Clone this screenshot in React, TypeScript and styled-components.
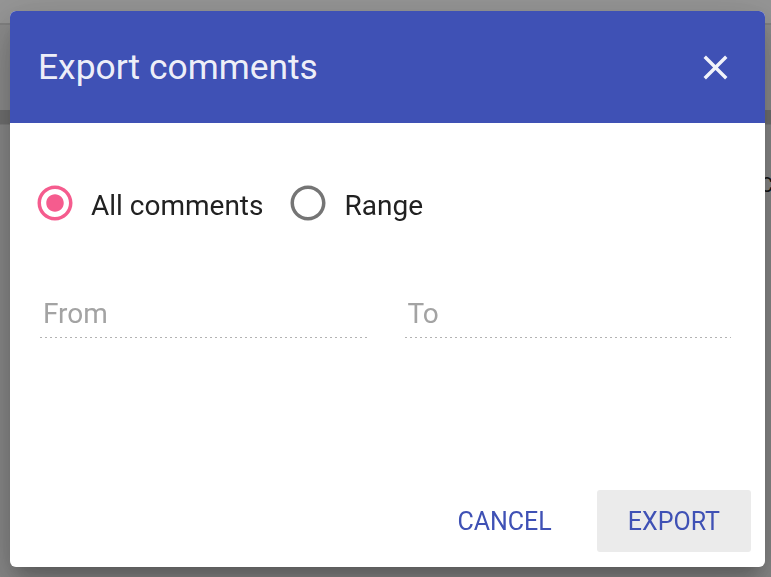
import React from 'react';
import styled, { createGlobalStyle } from 'styled-components';

const GlobalStyle = createGlobalStyle`
    html, body {
        margin: 0;
        padding: 0;
        width: 100%;
        height: 100%;
        overflow: hidden;
        font-family: Roboto, 'Liberation Sans', sans-serif;
    }
`;

const Page = styled.div`
    width: 771px;
    height: 577px;
    background-color: #e3e3e3;
    display: flex;
    flex-direction: column;
    overflow: hidden;
`;

const TopBar = styled.div`
    height: 23px;
    background-color: #fafafa;
    border-bottom: 2px solid #d6d6d6;
`;

const PageHead = styled.div`
    height: 85px;
    background-color: #e9e9e9;
`;

const PageToolbar = styled.div`
    height: 14px;
    background-color: #bbbbbb;
    border-bottom: 1px solid #d0d0d0;
`;

const PageRow = styled.div`
    padding: 48px 0 0 760px;
    font-size: 20px;
    color: #222;
    white-space: nowrap;
`;

const Backdrop = styled.div`
    position: fixed;
    inset: 0;
    background-color: rgba(0, 0, 0, 0.4);
`;

const Dialog = styled.div`
    position: fixed;
    left: 10px;
    top: 11px;
    width: 755px;
    height: 556px;
    background-color: #fff;
    border-radius: 6px;
    overflow: hidden;
    display: flex;
    flex-direction: column;
    box-shadow: 0 11px 15px -7px rgba(0, 0, 0, 0.2),
        0 24px 38px 3px rgba(0, 0, 0, 0.14), 0 9px 46px 8px rgba(0, 0, 0, 0.12);
`;

const Header = styled.div`
    height: 112px;
    flex-shrink: 0;
    background-color: #3f51b5;
    display: flex;
    align-items: center;
    justify-content: space-between;
    padding: 0 29px 0 28px;
`;

const Title = styled.h2`
    margin: 0;
    font-size: 35.4px;
    font-weight: 400;
    color: rgba(255, 255, 255, 0.93);
`;

const CloseButton = styled.button`
    border: none;
    background: none;
    padding: 0;
    width: 41px;
    height: 41px;
    display: flex;
    cursor: pointer;
`;

const Body = styled.div`
    flex: 1;
    padding: 59px 34px 0 24px;
`;

const RadioGroup = styled.div`
    display: flex;
    align-items: center;
    height: 42px;
`;

const RadioOption = styled.label`
    display: flex;
    align-items: center;
    gap: 15px;
    margin-right: 24px;
    font-size: 28px;
    color: #212121;
    cursor: pointer;
`;

const RadioLabel = styled.span`
    padding-top: 4px;
`;

const FieldsRow = styled.div`
    display: grid;
    grid-template-columns: 1fr 1fr;
    gap: 38px;
    margin-top: 75px;
    padding-left: 6px;
`;

const Field = styled.input`
    display: block;
    width: 100%;
    height: 39px;
    box-sizing: border-box;
    padding: 0 3px 11px;
    border: none;
    outline: none;
    font-family: inherit;
    font-size: 28px;
    color: #212121;
    background: repeating-linear-gradient(
            to right,
            #b3b3b3 0 2px,
            transparent 2px 5px
        )
        left bottom / 100% 1px no-repeat;

    &::placeholder {
        color: #a3a3a3;
    }
`;

const Actions = styled.div`
    display: flex;
    justify-content: flex-end;
    gap: 14px;
    padding: 0 14px 15px 0;
`;

const ActionButton = styled.button<{ $filled?: boolean }>`
    height: 62px;
    padding: 0 31px;
    border: none;
    border-radius: 3px;
    background-color: ${(props) => (props.$filled ? '#ebebeb' : 'transparent')};
    color: #3f51b5;
    font-family: inherit;
    font-size: 25px;
    font-weight: 400;
    text-transform: uppercase;
    cursor: pointer;
`;

const RadioIcon = ({ checked }: { checked: boolean }) => (
    <svg width='42' height='42' viewBox='0 0 24 24'>
        {checked ? (
            <path
                fill='#f55c8e'
                d='M12 7c-2.76 0-5 2.24-5 5s2.24 5 5 5 5-2.24 5-5-2.24-5-5-5zm0-5C6.48 2 2 6.48 2 12s4.48 10 10 10 10-4.48 10-10S17.52 2 12 2zm0 18c-4.42 0-8-3.58-8-8s3.58-8 8-8 8 3.58 8 8-3.58 8-8 8z'
            />
        ) : (
            <path
                fill='#757575'
                d='M12 2C6.48 2 2 6.48 2 12s4.48 10 10 10 10-4.48 10-10S17.52 2 12 2zm0 18c-4.42 0-8-3.58-8-8s3.58-8 8-8 8 3.58 8 8-3.58 8-8 8z'
            />
        )}
    </svg>
);

const App = () => {
    return (
        <>
            <GlobalStyle />
            <Page>
                <TopBar />
                <PageHead />
                <PageToolbar />
                <PageRow>Comments</PageRow>
            </Page>
            <Backdrop />
            <Dialog>
                <Header>
                    <Title>Export comments</Title>
                    <CloseButton aria-label='close'>
                        <svg width='41' height='41' viewBox='0 0 24 24'>
                            <path
                                fill='rgba(255,255,255,0.93)'
                                d='M19 6.41L17.59 5 12 10.59 6.41 5 5 6.41 10.59 12 5 17.59 6.41 19 12 13.41 17.59 19 19 17.59 13.41 12z'
                            />
                        </svg>
                    </CloseButton>
                </Header>
                <Body>
                    <RadioGroup>
                        <RadioOption>
                            <RadioIcon checked />
                            <RadioLabel>All comments</RadioLabel>
                        </RadioOption>
                        <RadioOption>
                            <RadioIcon checked={false} />
                            <RadioLabel>Range</RadioLabel>
                        </RadioOption>
                    </RadioGroup>
                    <FieldsRow>
                        <Field placeholder='From' />
                        <Field placeholder='To' />
                    </FieldsRow>
                </Body>
                <Actions>
                    <ActionButton>Cancel</ActionButton>
                    <ActionButton $filled>Export</ActionButton>
                </Actions>
            </Dialog>
        </>
    );
};

export default App;
